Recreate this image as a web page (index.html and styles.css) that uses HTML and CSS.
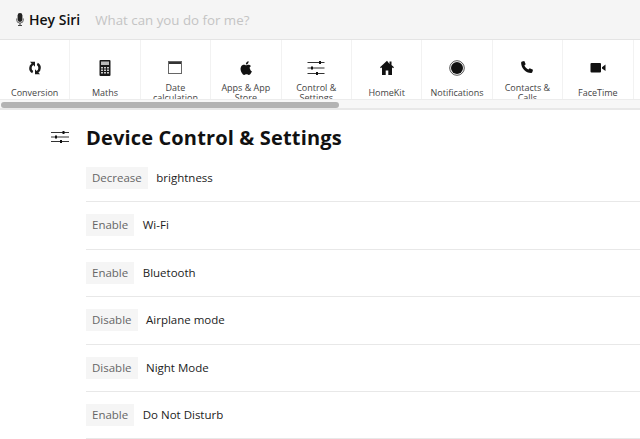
FILE: index.html
```html
<!DOCTYPE html>
<html lang="en">
<head>
<meta charset="utf-8">
<title>Hey Siri</title>
<link rel="stylesheet" href="styles.css">
</head>
<body>
<header class="top">
  <svg class="mic" width="8" height="13" viewBox="0 0 8 13"><rect x="1.6" y="0" width="4.8" height="9" rx="2.4" fill="#222"/><path d="M0.6 5.5v1.2a3.4 3.4 0 0 0 6.8 0V5.5" fill="none" stroke="#444" stroke-width="0.8"/><path d="M4 10v2M2 12.5h4" stroke="#444" stroke-width="1"/></svg>
  <span class="brand">Hey Siri</span>
  <span class="prompt">What can you do for me?</span>
</header>
<nav class="tabs">
  <div class="tabrow">
    <a class="tab"><svg class="ico" width="20" height="20" viewBox="0 0 20 20"><g transform="rotate(90 10 10)"><path d="M10 4.200a5.600 5.600 0 0 1 4.600 2.400L16.200 5v5h-5l1.700-1.700A3.500 3.500 0 0 0 7 8.200L4.700 7.200A5.700 5.700 0 0 1 10 4.200zM10 15.800a5.600 5.600 0 0 1-4.600-2.400L3.800 15v-5h5l-1.700 1.700A3.500 3.500 0 0 0 13 11.800l2.300 1A5.700 5.700 0 0 1 10 15.800z" fill="#1a1a1a"/></g></svg><span class="lbl">Conversion</span></a>
    <a class="tab"><svg class="ico" width="20" height="20" viewBox="0 0 20 20"><rect x="4.500" y="2" width="11" height="16" rx="1" fill="#1a1a1a"/><rect x="6" y="3.500" width="8" height="3.500" fill="#bbb"/><path d="M6 9h2v1.500H6zM9 9h2v1.500H9zM12 9h2v1.500h-2zM6 11.500h2V13H6zM9 11.500h2V13H9zM12 11.500h2V13h-2zM6 14h2v1.500H6zM9 14h2v1.500H9zM12 14h2v1.500h-2z" fill="#ccc"/></svg><span class="lbl">Maths</span></a>
    <a class="tab"><svg class="ico" width="20" height="20" viewBox="0 0 20 20"><rect x="3" y="3" width="14" height="3" fill="#333"/><rect x="3.500" y="3.500" width="13" height="12" fill="none" stroke="#666"/></svg><span class="lbl">Date calculation</span></a>
    <a class="tab"><svg class="ico" width="20" height="20" viewBox="0 0 20 20"><path d="M13.600 10.400c0-1.600 1.300-2.300 1.400-2.400-.8-1.100-2-1.300-2.400-1.300-1-.1-2 .6-2.500.6s-1.300-.6-2.200-.6C6.800 6.700 5.700 7.400 5.100 8.400c-1.200 2-.3 5.100.9 6.800.6.800 1.300 1.800 2.200 1.700.9 0 1.200-.6 2.300-.6s1.400.6 2.300.6 1.500-.8 2.100-1.700c.7-1 1-1.900 1-2-.1 0-1.900-.7-1.900-2.800zM11.900 5.400c.5-.6.800-1.400.7-2.200-.7 0-1.500.5-2 1.100-.4.500-.8 1.300-.7 2.100.8.100 1.500-.4 2-1z" fill="#111"/></svg><span class="lbl">Apps &amp; App Store</span></a>
    <a class="tab"><svg class="ico" width="20" height="20" viewBox="0 0 20 20"><path d="M1.500 4.500h17M1.500 10h17M1.500 15.500h17" stroke="#333" stroke-width="1"/><path d="M13 3h2v3h-2zM5 8.500h2v3H5zM10 14h2v3h-2z" fill="#111"/></svg><span class="lbl">Control &amp; Settings</span></a>
    <a class="tab"><svg class="ico" width="20" height="20" viewBox="0 0 20 20"><path d="M10 2.800 3 9.200l1 1 1-.9V17h3.700v-4.500h2.600V17H15V9.300l1 .9 1-1-2.500-2.300V3.500h-2v2.500z" fill="#111"/></svg><span class="lbl">HomeKit</span></a>
    <a class="tab"><svg class="ico" width="20" height="20" viewBox="0 0 20 20"><circle cx="10" cy="10" r="6" fill="#111"/><circle cx="10" cy="10" r="7.300" fill="none" stroke="#555" stroke-width="1"/></svg><span class="lbl">Notifications</span></a>
    <a class="tab"><svg class="ico" width="20" height="20" viewBox="0 0 20 20"><path d="M5 3.500 7.300 3l1.400 3.200-1.300 1.300c.7 1.700 2.200 3.200 4 4l1.300-1.300 3.300 1.500-.6 2.300c-.2.700-.7 1-1.300 1C8.600 15 4.500 10.500 4.100 5c0-.7.300-1.300.9-1.500z" fill="#111"/></svg><span class="lbl">Contacts &amp; Calls</span></a>
    <a class="tab"><svg class="ico" width="20" height="20" viewBox="0 0 20 20"><rect x="2.500" y="5" width="10.500" height="9.500" rx="1" fill="#111"/><path d="M14 9.200 17.500 6.500v6.500L14 10.500z" fill="#111"/></svg><span class="lbl">FaceTime</span></a>
  </div>
  <div class="track"><div class="thumb"></div></div>
</nav>
<main class="section">
  <svg class="section-ico" width="18" height="14" viewBox="0 0 18 14"><path d="M0 2.500h18M0 7h18M0 11.500h18" stroke="#333" stroke-width="1"/><path d="M11.500 1h2v3h-2zM4 5.500h2v3H4zM9 10h2v3H9z" fill="#111"/></svg>
  <div class="body">
    <h1 class="title">Device Control &amp; Settings</h1>
    <div class="row"><span class="verb">Decrease</span><span class="obj">brightness</span></div>
    <div class="row"><span class="verb">Enable</span><span class="obj">Wi-Fi</span></div>
    <div class="row"><span class="verb">Enable</span><span class="obj">Bluetooth</span></div>
    <div class="row"><span class="verb">Disable</span><span class="obj">Airplane mode</span></div>
    <div class="row"><span class="verb">Disable</span><span class="obj">Night Mode</span></div>
    <div class="row"><span class="verb">Enable</span><span class="obj">Do Not Disturb</span></div>
  </div>
</main>
</body>
</html>
```
FILE: styles.css
```css
* { box-sizing: border-box; }
html, body { margin: 0; padding: 0; height: 100%; overflow: hidden; }
body { background: #fff; font-family: "Open Sans", sans-serif; color: #111; }
.top { height: 40px; background: #f5f5f5; border-bottom: 1px solid #e4e4e4; display: flex; align-items: center; padding-left: 16px; }
.mic { margin-right: 5px; }
.brand { font-size: 14px; font-weight: 600; color: #111; margin-right: 15px; }
.prompt { font-size: 13.3px; color: #c4c4c4; }
.tabs { height: 70px; border-bottom: 2px solid #e8e8e8; background: #fff; overflow: hidden; }
.tabrow { display: flex; height: 59px; overflow: hidden; }
.tab { flex: 0 0 70.4px; height: 59px; border-right: 1px solid #f2f2f2; display: flex; flex-direction: column; align-items: center; text-align: center; padding-top: 18px; }
.ico { flex: none; }
.lbl { flex: none; font-size: 9px; line-height: 10px; color: #444; height: 20px; width: 66px; display: flex; align-items: center; justify-content: center; margin-top: 5px; }
.track { height: 9px; background: #f7f7f7; border-top: 1px solid #ececec; padding: 2px 1px 0; }
.thumb { width: 338px; height: 6px; background: #b3b3b3; border-radius: 3px; }
.section { display: flex; align-items: flex-start; padding-left: 51px; }
.section-ico { margin: 20px 17px 0 0; flex: none; }
.body { flex: 1; min-width: 0; }
.title { margin: 0; font-size: 20px; line-height: 26px; font-weight: 700; padding-top: 14.5px; height: 45px; color: #111; letter-spacing: 0.15px; }
.row { height: 47.4px; padding-top: 12px; border-bottom: 1px solid #e8e8e8; display: flex; align-items: flex-start; }
.verb { background: #f5f5f5; font-size: 11.5px; line-height: 22px; height: 22px; color: #666; padding: 0 6px; margin-right: 8.5px; }
.obj { font-size: 11.5px; line-height: 22px; color: #222; }
```
